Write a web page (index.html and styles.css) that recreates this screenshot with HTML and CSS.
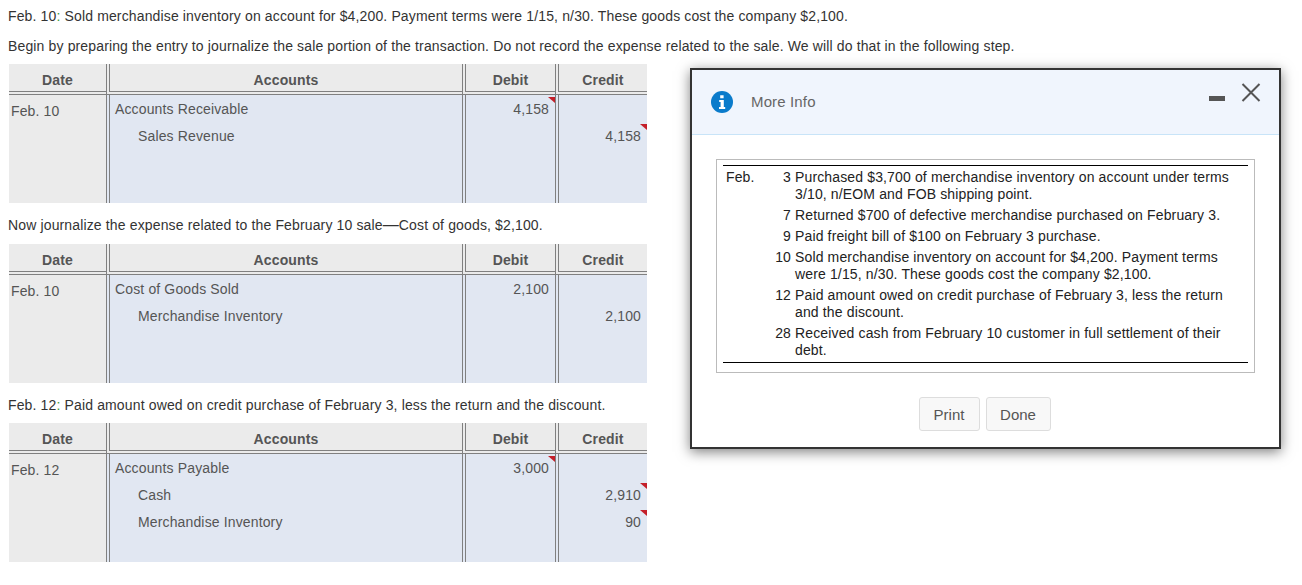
FILE: index.html
```html
<!DOCTYPE html>
<html lang="en">
<head>
  <meta charset="UTF-8" />
  <title>Journal entries</title>
  <link rel="stylesheet" href="styles.css">
</head>
<body>
  <p class="line first">Feb. 10<span class="colon">:</span> Sold merchandise inventory on account for $4,200. Payment terms were 1/15, n/30. These goods cost the company $2,100.</p>
  <p class="line second">Begin by preparing the entry to journalize the sale portion of the transaction. Do not record the expense related to the sale. We will do that in the following step.</p>

  <table class="journal">
    <thead>
      <tr><th class="c-date">Date</th><th class="c-acct">Accounts</th><th class="c-num">Debit</th><th class="c-credit">Credit</th></tr>
    </thead>
    <tbody>
      <tr><td class="date">Feb. 10</td><td class="acct">Accounts Receivable</td><td class="num"><span class="mark"></span>4,158</td><td class="num"></td></tr>
      <tr><td class="date"></td><td class="acct indent">Sales Revenue</td><td class="num"></td><td class="num"><span class="mark"></span>4,158</td></tr>
      <tr><td class="date"></td><td class="acct"></td><td class="num"></td><td class="num"></td></tr>
      <tr><td class="date"></td><td class="acct"></td><td class="num"></td><td class="num"></td></tr>
    </tbody>
  </table>

  <p class="line between">Now journalize the expense related to the February 10 sale<span class="dash">—</span>Cost of goods, $2,100.</p>

  <table class="journal">
    <thead>
      <tr><th class="c-date">Date</th><th class="c-acct">Accounts</th><th class="c-num">Debit</th><th class="c-credit">Credit</th></tr>
    </thead>
    <tbody>
      <tr><td class="date">Feb. 10</td><td class="acct">Cost of Goods Sold</td><td class="num">2,100</td><td class="num"></td></tr>
      <tr><td class="date"></td><td class="acct indent">Merchandise Inventory</td><td class="num"></td><td class="num">2,100</td></tr>
      <tr><td class="date"></td><td class="acct"></td><td class="num"></td><td class="num"></td></tr>
      <tr><td class="date"></td><td class="acct"></td><td class="num"></td><td class="num"></td></tr>
    </tbody>
  </table>

  <p class="line between tight">Feb. 12<span class="colon">:</span> Paid amount owed on credit purchase of February 3, less the return and the discount.</p>

  <table class="journal">
    <thead>
      <tr><th class="c-date">Date</th><th class="c-acct">Accounts</th><th class="c-num">Debit</th><th class="c-credit">Credit</th></tr>
    </thead>
    <tbody>
      <tr><td class="date">Feb. 12</td><td class="acct">Accounts Payable</td><td class="num"><span class="mark"></span>3,000</td><td class="num"></td></tr>
      <tr><td class="date"></td><td class="acct indent">Cash</td><td class="num"></td><td class="num"><span class="mark"></span>2,910</td></tr>
      <tr><td class="date"></td><td class="acct indent">Merchandise Inventory</td><td class="num"></td><td class="num"><span class="mark"></span>90</td></tr>
      <tr><td class="date"></td><td class="acct"></td><td class="num"></td><td class="num"></td></tr>
    </tbody>
  </table>

  <div class="modal">
    <div class="modal-head">
      <svg class="info-icon" width="22" height="22" viewBox="0 0 22 22">
        <circle cx="11" cy="11" r="11" fill="#0a7bcb"/>
        <path d="M9.2 4.2h3.4v3h-3.4zM8.2 9h4.6v7h1.4v2H8v-2h1.6v-5H8.2z" fill="#fff"/>
      </svg>
      <span class="modal-title">More Info</span>
      <span class="minimize"></span>
      <svg class="close-icon" width="20" height="19" viewBox="0 0 20 19">
        <path d="M1.5 1L18.5 18M18.5 1L1.5 18" stroke="#555" stroke-width="2" fill="none"/>
      </svg>
    </div>
    <div class="modal-body">
      <div class="info-box">
        <div class="info-rules">
          <div class="info-row"><span class="month">Feb.</span><span class="day">3</span><span class="desc">Purchased $3,700 of merchandise inventory on account under terms 3/10, n/EOM and FOB shipping point.</span></div>
          <div class="info-row"><span class="month"></span><span class="day">7</span><span class="desc">Returned $700 of defective merchandise purchased on February 3.</span></div>
          <div class="info-row"><span class="month"></span><span class="day">9</span><span class="desc">Paid freight bill of $100 on February 3 purchase.</span></div>
          <div class="info-row"><span class="month"></span><span class="day">10</span><span class="desc">Sold merchandise inventory on account for $4,200. Payment terms were 1/15, n/30. These goods cost the company $2,100.</span></div>
          <div class="info-row"><span class="month"></span><span class="day">12</span><span class="desc">Paid amount owed on credit purchase of February 3, less the return and the discount.</span></div>
          <div class="info-row"><span class="month"></span><span class="day">28</span><span class="desc">Received cash from February 10 customer in full settlement of their debt.</span></div>
        </div>
      </div>
      <div class="modal-buttons">
        <button type="button" class="btn btn-print">Print</button>
        <button type="button" class="btn btn-done">Done</button>
      </div>
    </div>
  </div>
</body>
</html>
```

FILE: styles.css
```css
html, body {
  margin: 0;
  padding: 0;
}
body {
  font-family: "Liberation Sans", Arial, sans-serif;
  font-size: 14px;
  letter-spacing: 0.14px;
  color: #333;
  background: #fff;
  padding-left: 9px;
  overflow: hidden;
}
.line {
  margin: 0 0 0 -1px;
  height: 16px;
  line-height: 16px;
}
.first {
  padding-top: 8px;
}
.second {
  margin-top: 14px;
  margin-bottom: 10px;
}
.between {
  margin-top: 14px;
  margin-bottom: 11px;
}
.between.tight {
  margin-bottom: 10px;
}
.colon {
  color: #3a9a3a;
}
.dash {
  font-size: 16px;
  line-height: 14px;
}

.journal {
  border-collapse: separate;
  border-spacing: 0;
  table-layout: fixed;
  width: 638px;
}
.journal th {
  height: 23px;
  padding: 4px 0 0;
  background: #ebebeb;
  color: #555;
  font-weight: bold;
  border-bottom: 4px double #808080;
  box-sizing: content-box;
}
.c-date {
  width: 97px;
}
.c-acct {
  width: 352px;
}
.c-num {
  width: 89px;
}
.c-credit {
  width: 88px;
}
.journal th + th,
.journal td + td {
  border-left: 4px double #808080;
}
.journal td {
  height: 27px;
  padding: 0;
  color: #555;
  background: #e1e7f2;
  box-sizing: border-box;
}
.journal td.date {
  background: #ebebeb;
  padding: 4px 0 0 2px;
}
.journal td.acct {
  padding-left: 5px;
  white-space: nowrap;
}
.journal td.indent {
  padding-left: 28px;
}
.journal td.num {
  position: relative;
  text-align: right;
  padding-right: 6px;
}
.mark {
  position: absolute;
  top: 2px;
  right: 0;
  width: 0;
  height: 0;
  border-top: 6px solid #c4202a;
  border-left: 7px solid transparent;
}

.modal {
  position: absolute;
  left: 690px;
  top: 68px;
  width: 587px;
  height: 377px;
  border: 2px solid #333;
  background: #fff;
  box-shadow: 0 3px 12px rgba(0, 0, 0, 0.5);
}
.modal-head {
  position: relative;
  display: flex;
  align-items: center;
  height: 65px;
  background: #f0f5fd;
  border-bottom: 1px solid #c8e4f8;
  padding-left: 19px;
  box-sizing: border-box;
}
.modal-title {
  margin-left: 18px;
  margin-bottom: 2px;
  color: #666;
  font-size: 15px;
}
.minimize {
  position: absolute;
  left: 517px;
  top: 26px;
  width: 16px;
  height: 5px;
  background: #555;
}
.close-icon {
  position: absolute;
  left: 549px;
  top: 13px;
}
.modal-body {
  padding: 24px 24px 0;
}
.info-box {
  border: 1px solid #bbb;
  padding: 5px 6px 10px;
  height: 214px;
  box-sizing: border-box;
}
.info-rules {
  border-top: 1px solid #000;
  border-bottom: 1px solid #000;
  padding-top: 3px;
  height: 198px;
  box-sizing: border-box;
  color: #222;
}
.info-row {
  display: flex;
  line-height: 17px;
  margin-bottom: 4px;
}
.month {
  width: 44px;
  padding-left: 3px;
  box-sizing: border-box;
}
.day {
  width: 24px;
  text-align: right;
  flex: none;
}
.desc {
  margin-left: 4px;
  width: 440px;
}
.modal-buttons {
  display: flex;
  justify-content: center;
  gap: 6px;
  margin-top: 24px;
  padding-right: 2px;
}
.btn {
  height: 34px;
  border: 1px solid #ddd;
  border-radius: 3px;
  background: #f8f8f8;
  color: #555;
  font: 15px "Liberation Sans", Arial, sans-serif;
  padding: 0;
}
.btn-print {
  width: 61px;
}
.btn-done {
  width: 65px;
}
```
